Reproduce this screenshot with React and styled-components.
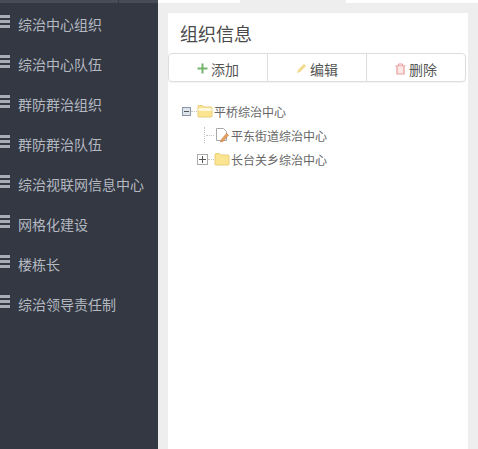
import React from 'react';
import styled, { createGlobalStyle } from 'styled-components';

const GlobalStyle = createGlobalStyle`
  html, body {
    margin: 0;
    height: 100%;
    overflow: hidden;
  }
  body {
    font-family: "Noto Sans CJK SC", "Liberation Sans", sans-serif;
  }
`;

const Page = styled.div`
  display: flex;
  width: 478px;
  height: 449px;
  overflow: hidden;
`;

const Sidebar = styled.div`
  width: 158px;
  flex: none;
  background: #333843;
`;

const SideTop = styled.div`
  display: flex;
  height: 3px;
  background: #474c57;
  margin-bottom: 1px;
  justify-content: flex-end;
  padding-right: 39px;
`;

const SideTopMark = styled.div`
  width: 1px;
  background: #333843;
`;

const Menu = styled.ul`
  list-style: none;
  margin: 0;
  padding: 0;
`;

const MenuItem = styled.li`
  display: flex;
  align-items: center;
  height: 40px;
  font-size: 14px;
  color: #b4b8c0;
  white-space: nowrap;
`;

const MenuIcon = styled.span`
  width: 10px;
  height: 13px;
  margin: -5px 8px 0 0;
  flex: none;
  background: repeating-linear-gradient(#a9adb5 0 3px, transparent 3px 5px);
`;

const Main = styled.div`
  flex: 1;
  background: #eeeeee;
`;

const MainTop = styled.div`
  display: flex;
  justify-content: space-between;
  height: 3px;
`;

const TopTab = styled.div`
  background: #ffffff;
  width: ${p => p.$width}px;
`;

const Card = styled.div`
  margin: 10px 10px 0;
  height: 436px;
  background: #ffffff;
`;

const Title = styled.h3`
  margin: 0;
  padding: 0 12px;
  height: 40px;
  line-height: 40px;
  font-size: 18px;
  font-weight: 400;
  color: #4a4a4a;
`;

const ButtonGroup = styled.div`
  display: flex;
  width: 298px;
  height: 29px;
  box-sizing: border-box;
  border: 1px solid #dddddd;
  border-radius: 4px;
  box-shadow: 0 1px 1px rgba(0, 0, 0, 0.05);
`;

const Button = styled.div`
  flex: 1;
  display: flex;
  align-items: center;
  justify-content: center;
  gap: 3px;
  padding-top: 2px;
  box-sizing: border-box;
  font-size: 14px;
  color: #555555;
  & + & {
    border-left: 1px solid #dddddd;
  }
`;

const Tree = styled.div`
  padding: 17px 0 0 13px;
`;

const TreeRow = styled.div`
  display: flex;
  align-items: center;
  height: 24px;
  padding-left: ${p => p.$indent}px;
  font-size: 12px;
  color: #666666;
  white-space: nowrap;
`;

const TreeLabel = styled.span`
  margin-left: 1px;
`;

const Toggle = styled.span`
  width: ${p => p.$open ? 9 : 11}px;
  height: ${p => p.$open ? 9 : 11}px;
  margin-left: ${p => p.$open ? 1 : 0}px;
  box-sizing: border-box;
  border: 1px solid ${p => p.$open ? '#8a97a8' : '#aaaaaa'};
  background: ${p => p.$open ? '#dfe4ea' : '#ffffff'};
  position: relative;
  flex: none;
  &::before {
    content: '';
    position: absolute;
    left: 1px;
    right: 1px;
    top: ${p => p.$open ? 3 : 4}px;
    height: 1px;
    background: #555555;
  }
`;

const ToggleBar = styled.span`
  position: absolute;
  top: 1px;
  bottom: 1px;
  left: 4px;
  width: 1px;
  background: #555555;
`;

const Dots = styled.span`
  flex: none;
  width: ${p => p.$width}px;
  border-top: 1px dotted #c4c4c4;
`;

const VDots = styled.span`
  flex: none;
  width: 1px;
  height: 16px;
  border-left: 1px dotted #c4c4c4;
  margin-left: 8px;
`;

const FolderIcon = ({ open }) => (
  <svg width="16" height="14" viewBox="0 0 16 14">
    <path d="M1 12.500V2.500q0-1 1-1h3.500l1.500 1.500h7q1 0 1 1v8.500q0 .5-1 .5H2q-1 0-1-.5z" fill="#fbe590" stroke="#e8cd7a" />
    {open && <path d="M1.500 5.500h13" stroke="#fffbe8" strokeWidth="2.500" fill="none" />}
  </svg>
);

const NoteIcon = () => (
  <svg width="16" height="16" viewBox="0 0 16 16">
    <path d="M2.500 1.500h7l3 3v9h-10z" fill="#ffffff" stroke="#a8a8a8" />
    <path d="M7 13l5.500-6.500 2 1.500-5.500 6.500-2.500.5z" fill="#e8a060" stroke="#c07a3a" strokeWidth=".6" />
  </svg>
);

const PlusIcon = () => (
  <svg width="11" height="11" viewBox="0 0 11 11">
    <path d="M5.500 .5v10M.5 5.500h10" stroke="#74b56f" strokeWidth="2" />
  </svg>
);

const PencilIcon = () => (
  <svg width="11" height="11" viewBox="0 0 11 11">
    <path d="M1 10l1-3 6-6 2 2-6 6z" fill="#f3d98a" />
  </svg>
);

const TrashIcon = () => (
  <svg width="11" height="12" viewBox="0 0 11 12">
    <path d="M.5 3h10" fill="none" stroke="#eb9a9a" strokeWidth="1.200" />
    <path d="M3.500 3V1h4v2" fill="none" stroke="#eb9a9a" />
    <path d="M2 3.500v7.500h7V3.500" fill="#fde8e8" stroke="#eb9a9a" strokeWidth="1.200" />
  </svg>
);

const menuItems = ['综治中心组织', '综治中心队伍', '群防群治组织', '群防群治队伍', '综治视联网信息中心', '网格化建设', '楼栋长', '综治领导责任制'];

export default function App() {
  return (
    <Page>
      <GlobalStyle />
      <Sidebar>
        <SideTop>
          <SideTopMark />
        </SideTop>
        <Menu>
          {menuItems.map(item => (
            <MenuItem key={item}>
              <MenuIcon />
              {item}
            </MenuItem>
          ))}
        </Menu>
      </Sidebar>
      <Main>
        <MainTop>
          <TopTab $width={82} />
          <TopTab $width={132} />
        </MainTop>
        <Card>
          <Title>组织信息</Title>
          <ButtonGroup>
            <Button><PlusIcon />添加</Button>
            <Button><PencilIcon />编辑</Button>
            <Button><TrashIcon />删除</Button>
          </ButtonGroup>
          <Tree>
            <TreeRow $indent={0}>
              <Toggle $open />
              <Dots $width={6} />
              <FolderIcon open />
              <TreeLabel>平桥综治中心</TreeLabel>
            </TreeRow>
            <TreeRow $indent={15}>
              <VDots />
              <Dots $width={8} />
              <NoteIcon />
              <TreeLabel>平东街道综治中心</TreeLabel>
            </TreeRow>
            <TreeRow $indent={16}>
              <Toggle><ToggleBar /></Toggle>
              <Dots $width={6} />
              <FolderIcon />
              <TreeLabel>长台关乡综治中心</TreeLabel>
            </TreeRow>
          </Tree>
        </Card>
      </Main>
    </Page>
  );
}
